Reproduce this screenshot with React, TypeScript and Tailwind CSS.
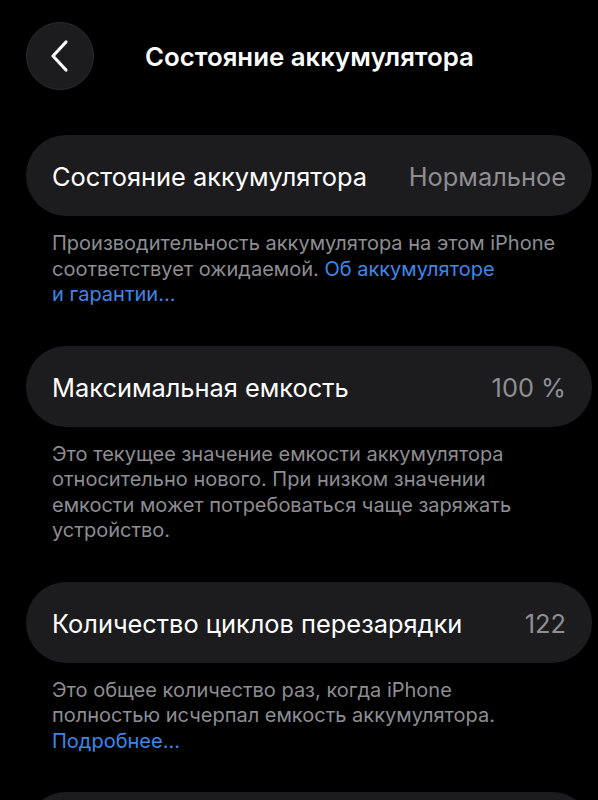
const font = "font-['Inter','Roboto','Liberation_Sans',sans-serif]";

type Row = {
  label: string;
  value: string;
  note: React.ReactNode;
};

const rows: Row[] = [
  {
    label: "Состояние аккумулятора",
    value: "Нормальное",
    note: (
      <>
        Производительность аккумулятора на этом iPhone
        <br />
        соответствует ожидаемой.{" "}
        <span className="text-[#3f86ea]">Об аккумуляторе</span>
        <br />
        <span className="text-[#3f86ea]">и гарантии…</span>
      </>
    ),
  },
  {
    label: "Максимальная емкость",
    value: "100 %",
    note: (
      <>
        Это текущее значение емкости аккумулятора
        <br />
        относительно нового. При низком значении
        <br />
        емкости может потребоваться чаще заряжать
        <br />
        устройство.
      </>
    ),
  },
  {
    label: "Количество циклов перезарядки",
    value: "122",
    note: (
      <>
        Это общее количество раз, когда iPhone
        <br />
        полностью исчерпал емкость аккумулятора.
        <br />
        <span className="text-[#3f86ea]">Подробнее…</span>
      </>
    ),
  },
];

function BackButton() {
  return (
    <button className="flex h-[68px] w-[68px] shrink-0 items-center justify-center rounded-full border border-[#2c2c2e] bg-[#1c1c1e]">
      <svg width="22" height="34" viewBox="0 0 22 34" fill="none">
        <path
          d="M17 3 L4 17 L17 31"
          stroke="white"
          strokeWidth="3.2"
          strokeLinecap="round"
          strokeLinejoin="round"
        />
      </svg>
    </button>
  );
}

export default function App() {
  return (
    <div className={`${font} h-[800px] w-[598px] overflow-hidden bg-black`}>
      <header className="flex items-center pl-[26px] pt-[22px]">
        <BackButton />
        <h1 className="ml-[51px] mt-[3px] whitespace-nowrap text-[25.8px] font-semibold text-white">
          Состояние аккумулятора
        </h1>
      </header>

      <div className="mt-[45px] flex flex-col gap-[38px] pl-[26px] pr-[6px]">
        {rows.map((row) => (
          <section key={row.label}>
            <div className="flex h-[81px] items-center justify-between rounded-[40px] bg-[#1c1c1e] px-[26px] pt-[4px]">
              <span className="whitespace-nowrap text-[25.4px] text-white">{row.label}</span>
              <span className="whitespace-nowrap text-[25.4px] text-[#8e8e93]">{row.value}</span>
            </div>
            <p className="mt-[15px] whitespace-nowrap pl-[26px] text-[20px] leading-[25.5px] text-[#8d8d92]">
              {row.note}
            </p>
          </section>
        ))}
        <div className="h-[81px] rounded-[40px] bg-[#1c1c1e]" />
      </div>
    </div>
  );
}
